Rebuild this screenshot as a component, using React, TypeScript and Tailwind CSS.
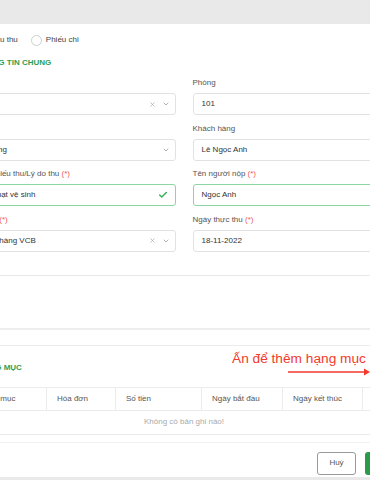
import { Check, ChevronDown, X } from "lucide-react";

function Label({ text, required }: { text: string; required?: boolean }) {
  return (
    <div className="h-[10px] mb-[5px] text-[8px] leading-[10px] text-[#555] whitespace-nowrap">
      {text}
      {required && <span className="text-[#f05a5a]"> (*)</span>}
    </div>
  );
}

function Field({
  label,
  value,
  required,
  clear,
  select,
  valid,
}: {
  label: string;
  value: string;
  required?: boolean;
  clear?: boolean;
  select?: boolean;
  valid?: boolean;
}) {
  return (
    <div>
      <Label text={label} required={required} />
      <div
        className={`h-[22px] rounded-[3px] border bg-white flex items-center pl-[8px] pr-[5px] text-[8px] text-[#333] whitespace-nowrap ${
          valid ? "border-[#8bd6a3]" : "border-[#e2e2e2]"
        }`}
      >
        <span className="flex-1">{value}</span>
        {clear && <X className="w-[7px] h-[7px] text-[#999] mr-[6px]" strokeWidth={2} />}
        {select && <ChevronDown className="w-[8px] h-[8px] text-[#888]" strokeWidth={2} />}
        {valid && <Check className="w-[10px] h-[10px] text-[#34b05a] mr-[2px]" strokeWidth={3.5} />}
      </div>
    </div>
  );
}

export default function App() {
  const cols = ["Hạng mục", "Hóa đơn", "Số tiền", "Ngày bắt đầu", "Ngày kết thúc", "Số kỳ"];

  return (
    <div className="relative w-[370px] h-[480px] overflow-hidden bg-[#e9e9e9] font-['Liberation_Sans',Arial,sans-serif]">
      <div className="h-[24px] bg-[#e9e9e9]" />
      <div className="-ml-[31px] w-[430px] bg-white">
        {/* radio row */}
        <div className="pt-[10px] h-[22px] flex items-center gap-[13px] text-[8px] text-[#444]">
          <label className="flex items-center gap-[4px]">
            <span className="w-[11px] h-[11px] rounded-full border border-[#cfcfcf] flex items-center justify-center">
              <span className="w-[5px] h-[5px] rounded-full bg-[#2e9e52]" />
            </span>
            Phiếu thu
          </label>
          <label className="flex items-center gap-[4px]">
            <span className="w-[11px] h-[11px] rounded-full border border-[#cfcfcf]" />
            Phiếu chi
          </label>
        </div>

        <div className="mt-[13px] text-[8px] leading-[8px] font-bold text-[#2e9e52]">I. THÔNG TIN CHUNG</div>

        <div className="mt-[11px] grid grid-cols-2 gap-x-[17px] gap-y-[8.5px]">
          <Field label="Tòa nhà" value="Tòa A" clear select />
          <Field label="Phòng" value="101" />
          <Field label="Loại thu" value="Thường" select />
          <Field label="Khách hàng" value="Lê Ngọc Anh" />
          <Field label="Mô tả phiếu thu/Lý do thu" value="Đổi quạt vệ sinh" required valid />
          <Field label="Tên người nộp" value="Ngọc Anh" required valid />
          <Field label="Quỹ thu" value="Ngân hàng VCB" required clear select />
          <Field label="Ngày thực thu" value="18-11-2022" required />
        </div>

        <div className="mt-[23px] border-t border-[#e8e8e8] h-[53px]" />
        <div className="border-t-2 border-[#eeeeee] h-[17px]" />
        <div className="border-t border-[#ececec]" />

        <div className="mt-[18px] text-[8px] leading-[8px] font-bold text-[#2e9e52]">II. HẠNG MỤC</div>

        {/* table */}
        <div className="mt-[15px] text-[8px] text-[#555]">
          <div className="grid grid-cols-[77px_69px_86px_81px_80px_37px] h-[24px] border-y border-[#ececec]">
            {cols.map((c, i) => (
              <div
                key={c}
                className={`flex items-center pl-[10px] whitespace-nowrap overflow-hidden ${
                  i > 0 ? "border-l border-[#ececec] pl-[7px]" : ""
                }`}
              >
                {c}
              </div>
            ))}
          </div>
          <div className="h-[24px] border-b border-[#ececec] flex items-center justify-center text-[#aaa]">
            Không có bản ghi nào!
          </div>
        </div>

        {/* footer */}
        <div className="mt-[7px] border-t border-[#f2f2f2] h-[35px] pt-[9px] flex justify-end gap-[9px]">
          <button className="w-[39px] h-[23px] rounded-[3px] border border-[#9a9a9a] bg-white text-[8px] text-[#555]">
            Huỷ
          </button>
          <button className="w-[34px] h-[23px] rounded-[3px] bg-[#2a9a4c] text-[8px] text-white">Lưu</button>
        </div>
      </div>

      {/* annotation */}
      <div className="absolute left-[232px] top-[350px] text-[13.7px] leading-[18px] text-[#f23a2c] whitespace-nowrap">
        Ấn để thêm hạng mục
      </div>
      <svg className="absolute left-[286px] top-[368px]" width="84" height="8" viewBox="0 0 84 8">
        <line x1="2" y1="4" x2="80" y2="4" stroke="#f23a2c" strokeWidth="1.6" />
        <path d="M78 0.5 L84 4 L78 7.5 Z" fill="#f23a2c" />
      </svg>
    </div>
  );
}
